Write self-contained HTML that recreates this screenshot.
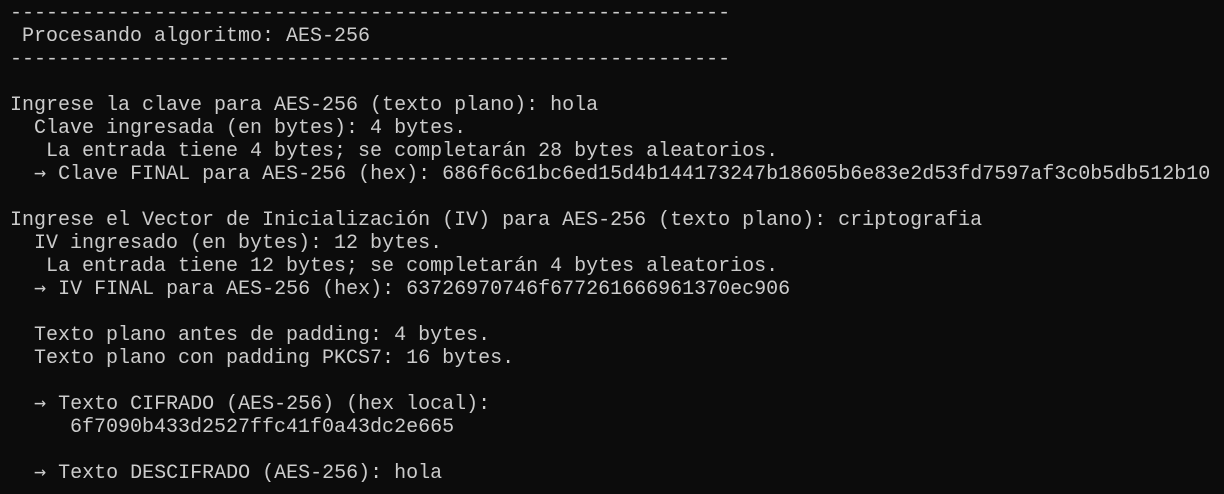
<!DOCTYPE html>
<html><head><meta charset="utf-8"><style>
html,body{margin:0;padding:0;background:#0c0c0c;width:1224px;height:494px;overflow:hidden}
.t{padding:2px 0 0 10px;font-family:"Liberation Mono","DejaVu Sans Mono",monospace;font-size:20px;color:#cccccc}
.t div{height:23px;line-height:23px;white-space:pre}
.a{font-family:"DejaVu Sans Mono",monospace;line-height:0}
</style></head><body><div class="t">
<div>------------------------------------------------------------</div>
<div> Procesando algoritmo: AES-256</div>
<div>------------------------------------------------------------</div>
<div></div>
<div>Ingrese la clave para AES-256 (texto plano): hola</div>
<div>  Clave ingresada (en bytes): 4 bytes.</div>
<div>   La entrada tiene 4 bytes; se completarán 28 bytes aleatorios.</div>
<div>  <span class="a">→</span> Clave FINAL para AES-256 (hex): 686f6c61bc6ed15d4b144173247b18605b6e83e2d53fd7597af3c0b5db512b10</div>
<div></div>
<div>Ingrese el Vector de Inicialización (IV) para AES-256 (texto plano): criptografia</div>
<div>  IV ingresado (en bytes): 12 bytes.</div>
<div>   La entrada tiene 12 bytes; se completarán 4 bytes aleatorios.</div>
<div>  <span class="a">→</span> IV FINAL para AES-256 (hex): 63726970746f677261666961370ec906</div>
<div></div>
<div>  Texto plano antes de padding: 4 bytes.</div>
<div>  Texto plano con padding PKCS7: 16 bytes.</div>
<div></div>
<div>  <span class="a">→</span> Texto CIFRADO (AES-256) (hex local):</div>
<div>     6f7090b433d2527ffc41f0a43dc2e665</div>
<div></div>
<div>  <span class="a">→</span> Texto DESCIFRADO (AES-256): hola</div>
</div></body></html>
